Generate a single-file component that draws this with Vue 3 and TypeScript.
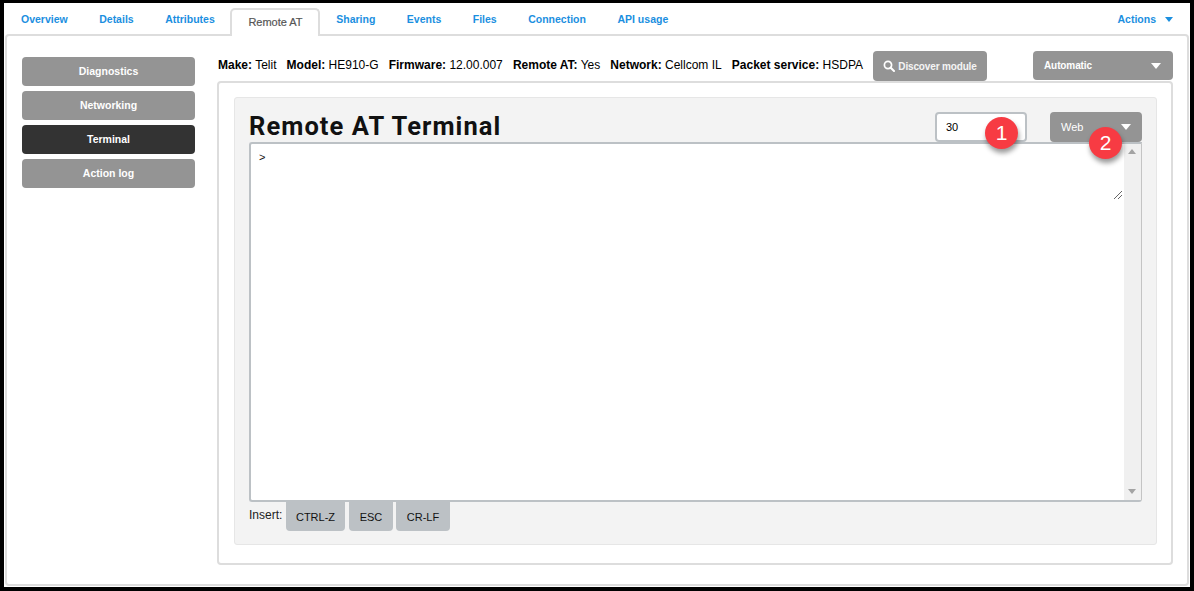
<script setup lang="ts">
const tabs = ['Overview', 'Details', 'Attributes', 'Remote AT', 'Sharing', 'Events', 'Files', 'Connection', 'API usage']
const side = ['Diagnostics', 'Networking', 'Terminal', 'Action log']
const info: [string, string][] = [
  ['Make:', 'Telit'], ['Model:', 'HE910-G'], ['Firmware:', '12.00.007'],
  ['Remote AT:', 'Yes'], ['Network:', 'Cellcom IL'], ['Packet service:', 'HSDPA'],
]
const inserts = ['CTRL-Z', 'ESC', 'CR-LF']
</script>

<template>
  <div class="frame">
    <nav class="tabs">
      <a v-for="t in tabs" :key="t" class="tab" :class="{ active: t === 'Remote AT' }">{{ t }}</a>
      <a class="actions">Actions <span class="caret blue"></span></a>
    </nav>
    <div class="page">
      <aside class="side">
        <button v-for="s in side" :key="s" class="side-btn" :class="{ on: s === 'Terminal' }">{{ s }}</button>
      </aside>
      <main class="main">
        <div class="infobar">
          <div class="info">
            <span v-for="i in info" :key="i[0]" class="pair"><b>{{ i[0] }}</b> {{ i[1] }}</span>
          </div>
          <button class="gray discover">
            <svg width="12" height="12" viewBox="0 0 12 12"><circle cx="5" cy="5" r="3.6" fill="none" stroke="#fff" stroke-width="1.7"/><path d="M7.7 7.7 11 11" stroke="#fff" stroke-width="2" stroke-linecap="round"/></svg>
            Discover module
          </button>
          <button class="gray select auto"><span>Automatic</span><span class="caret"></span></button>
        </div>
        <section class="outer">
          <div class="inner">
            <div class="head">
              <h1>Remote AT Terminal</h1>
              <div class="timeout">
                30
                <span class="badge one">1</span>
              </div>
              <button class="gray select web">
                <span>Web</span><span class="caret"></span>
                <span class="badge two">2</span>
              </button>
            </div>
            <div class="term">
              <div class="text">
                <div class="prompt">&gt;</div>
                <svg class="grip" width="10" height="10" viewBox="0 0 10 10"><path d="M1 9 9 1M5 9 9 5" stroke="#666" stroke-width="1" fill="none"/></svg>
              </div>
              <div class="scroll">
                <span class="up"></span>
                <span class="down"></span>
              </div>
            </div>
            <div class="insert">
              <span class="label">Insert:</span>
              <button v-for="b in inserts" :key="b" class="ins">{{ b }}</button>
            </div>
          </div>
        </section>
      </main>
    </div>
  </div>
</template>

<style>
html, body { margin: 0; background: #000; }
</style>

<style scoped>
.frame {
  box-sizing: border-box;
  width: 1186px;
  height: 584px;
  margin: 3px 0 0 4px;
  background: #fff;
  padding: 5px 1px 0 1px;
  font-family: "Liberation Sans", Arial, sans-serif;
  font-size: 12px;
  color: #000;
  display: flex;
  flex-direction: column;
  overflow: hidden;
}
button { font-family: inherit; border: 0; cursor: pointer; }
.tabs {
  display: flex;
  height: 27px;
  position: relative;
  z-index: 1;
  margin-bottom: -1px;
  align-items: flex-start;
  padding-left: 0.25px;
}
.tab {
  box-sizing: border-box;
  height: 23px;
  padding: 4px 15.75px 0;
  font-size: 10.5px;
  font-weight: bold;
  line-height: 14px;
  color: #1b8fdf;
  white-space: nowrap;
}
.tab.active {
  height: 28px;
  width: 90px;
  padding: 5px 0 0;
  text-align: center;
  border: 2px solid #ddd;
  border-bottom: 0;
  border-radius: 5px 5px 0 0;
  background: #fff;
  color: #555;
  font-weight: normal;
  font-size: 11px;
  -webkit-text-stroke: 0.2px #555;
}
.actions {
  margin-left: auto;
  margin-right: 16px;
  padding-top: 4px;
  font-size: 10.5px;
  font-weight: bold;
  line-height: 14px;
  color: #1b8fdf;
  display: flex;
  align-items: center;
  gap: 6px;
}
.caret {
  display: inline-block;
  width: 0; height: 0;
  border-left: 5px solid transparent;
  border-right: 5px solid transparent;
  border-top: 6px solid #fff;
}
.caret.blue {
  border-left-width: 4.5px;
  border-right-width: 4.5px;
  border-top-width: 5px;
  border-top-color: #1b8fdf;
  margin-left: 3px;
}
.page {
  flex: 1;
  display: flex;
  box-sizing: border-box;
  border: 2px solid #ddd;
  border-radius: 4px;
  margin-bottom: 1px;
  padding: 21px 14px 19px 15px;
  gap: 22px;
  min-height: 0;
}
.side { width: 173px; display: flex; flex-direction: column; gap: 5px; flex: none; }
.side-btn {
  height: 29px;
  border-radius: 4px;
  background: #949494;
  color: #fff;
  font-size: 10.5px;
  font-weight: bold;
  padding: 0 0 2px;
}
.side-btn.on { background: #333; }
.main { flex: 1; display: flex; flex-direction: column; min-width: 0; margin-top: -6px; }
.infobar { display: flex; height: 30px; flex: none; padding-left: 1px; }
.info { display: flex; gap: 10.1px; flex: none; align-items: center; height: 28px; width: 655px; white-space: nowrap; }
.pair b { font-weight: bold; }
.gray {
  background: #949494;
  color: #fff;
  border-radius: 4px;
  font-size: 11px;
}
.discover {
  width: 114px;
  height: 30px;
  padding: 0;
  font-size: 10px;
  font-weight: bold;
  letter-spacing: -0.15px;
  display: flex;
  align-items: center;
  justify-content: center;
  gap: 3px;
  color: #f4f4f4;
}
.select {
  display: flex;
  align-items: center;
  justify-content: space-between;
  padding: 0 11px;
  position: relative;
}
.auto { width: 140px; height: 29px; margin-left: 46px; font-size: 10px; font-weight: bold; letter-spacing: -0.1px; padding: 0 12px 0 11px; }
.auto span:first-child { margin-bottom: 1px; }
.outer {
  flex: 1;
  box-sizing: border-box;
  border: 2px solid #ddd;
  border-radius: 4px;
  padding: 14px 14px 18px 15px;
  min-height: 0;
}
.inner {
  box-sizing: border-box;
  height: 100%;
  background: #f3f3f3;
  border: 1px solid #e6e6e6;
  border-radius: 3px;
  padding: 14px;
  display: flex;
  flex-direction: column;
}
.head { display: flex; align-items: flex-start; height: 30px; flex: none; }
h1 {
  margin: 0;
  font-family: Roboto, "Liberation Sans", sans-serif;
  font-size: 25.5px;
  font-weight: 700;
  letter-spacing: 1.07px;
  line-height: 28px;
  color: #111;
  width: 686px;
  flex: none;
  white-space: nowrap;
}
.timeout {
  box-sizing: border-box;
  width: 92px;
  height: 30px;
  border: 2px solid #bcc1c5;
  border-radius: 4px;
  background: #fff;
  padding-left: 9px;
  line-height: 26px;
  font-size: 11px;
  position: relative;
}
.web { width: 92px; height: 30px; margin-left: 23px; flex: none; }
.badge {
  position: absolute;
  width: 33px;
  height: 32px;
  border-radius: 50%;
  background: #f73b43;
  color: #fff;
  font-family: "Liberation Sans", sans-serif;
  font-size: 21px;
  line-height: 32px;
  text-align: center;
  box-shadow: 1px 4px 5px rgba(0,0,0,.4);
  z-index: 3;
}
.one { left: 48px; top: 3px; }
.two { left: 39px; top: 15px; }
.term {
  flex: none;
  height: 360px;
  box-sizing: border-box;
  border: 2px solid #bcc1c5;
  border-radius: 3px 0 3px 3px;
  border-right: 1px solid #c4c4c4;
  background: #fff;
  display: flex;
  position: relative;
}
.text { flex: 1; position: relative; padding: 7px 8px; font-size: 11px; }
.prompt { line-height: 13px; color: #111; }
.grip { position: absolute; right: 1px; top: 46px; }
.scroll { width: 17px; background: #f0f0f0; position: relative; flex: none; }
.up, .down {
  position: absolute;
  left: 4px;
  width: 0; height: 0;
  border-left: 4px solid transparent;
  border-right: 4px solid transparent;
}
.up { top: 5px; border-bottom: 5px solid #a3a3a3; }
.down { bottom: 6px; border-top: 5px solid #a3a3a3; }
.insert { display: flex; align-items: flex-start; gap: 4px; }
.label { width: 33px; margin-top: 6px; line-height: 14px; color: #222; }
.ins {
  height: 29px;
  border-radius: 0 0 4px 4px;
  background: #bcc1c5;
  color: #111;
  font-size: 11px;
  padding: 0;
  width: 59px;
}
.ins:nth-of-type(2) { width: 44px; }
.ins:nth-of-type(3) { width: 54px; margin-left: -1px; }
</style>
